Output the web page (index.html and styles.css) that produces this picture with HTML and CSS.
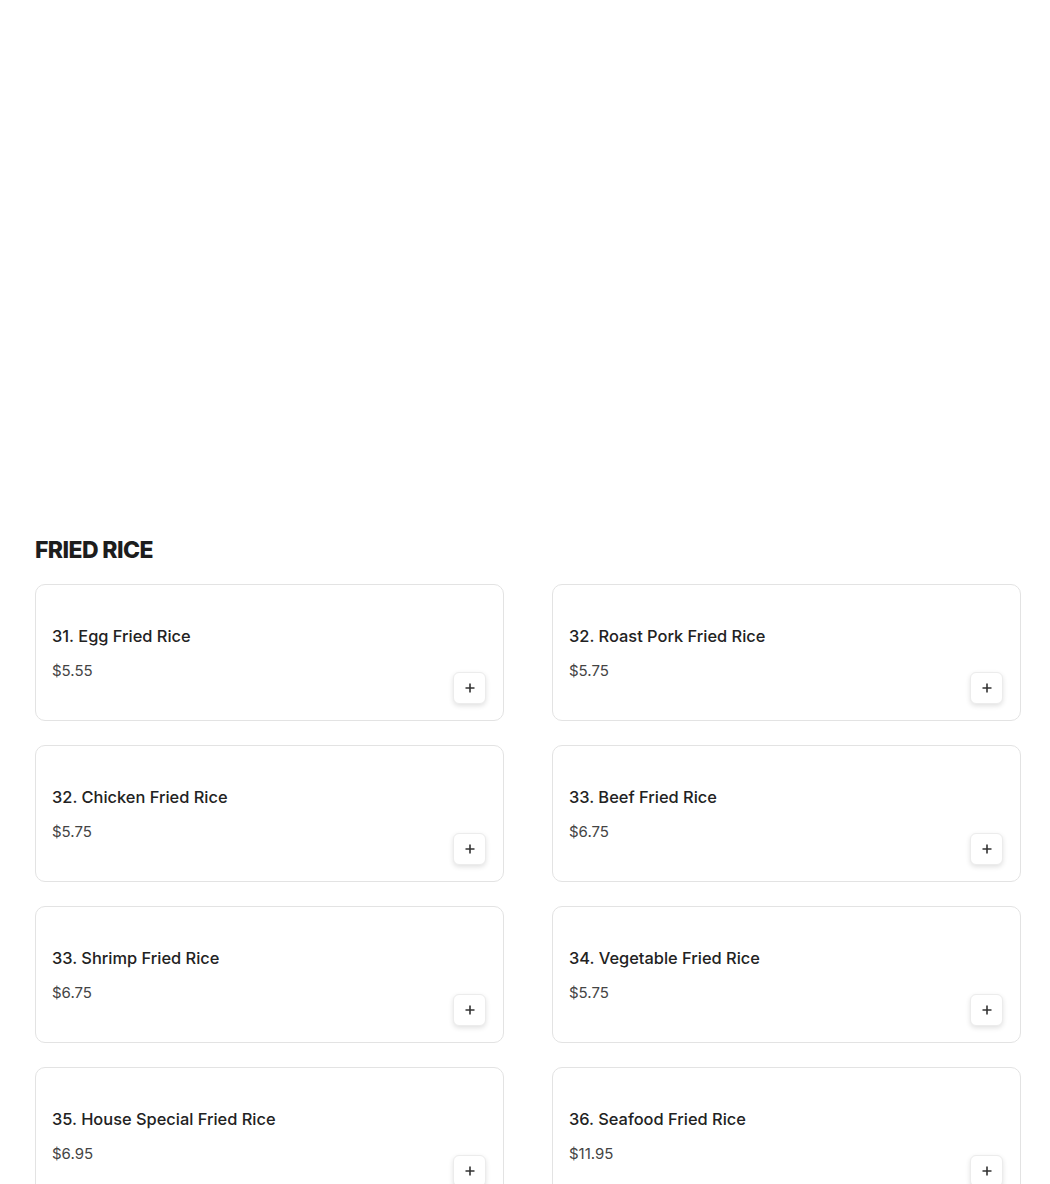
FILE: index.html
```html
<!DOCTYPE html>
<html>
<head>
<meta charset="utf-8">
<link rel="stylesheet" href="styles.css">
</head>
<body>
<div class="page">
  <div class="hero"></div>
  <section class="section">
    <h2 class="section-title">FRIED RICE</h2>
    <div class="grid">
      <div class="card"><div class="info"><div class="name">31. Egg Fried Rice</div><div class="price">$5.55</div></div><button class="add"><svg width="12" height="12" viewBox="0 0 12 12"><path d="M6 1.5v9M1.5 6h9" stroke="#333" stroke-width="1.6"/></svg></button></div>
      <div class="card"><div class="info"><div class="name">32. Roast Pork Fried Rice</div><div class="price">$5.75</div></div><button class="add"><svg width="12" height="12" viewBox="0 0 12 12"><path d="M6 1.5v9M1.5 6h9" stroke="#333" stroke-width="1.6"/></svg></button></div>
      <div class="card"><div class="info"><div class="name">32. Chicken Fried Rice</div><div class="price">$5.75</div></div><button class="add"><svg width="12" height="12" viewBox="0 0 12 12"><path d="M6 1.5v9M1.5 6h9" stroke="#333" stroke-width="1.6"/></svg></button></div>
      <div class="card"><div class="info"><div class="name">33. Beef Fried Rice</div><div class="price">$6.75</div></div><button class="add"><svg width="12" height="12" viewBox="0 0 12 12"><path d="M6 1.5v9M1.5 6h9" stroke="#333" stroke-width="1.6"/></svg></button></div>
      <div class="card"><div class="info"><div class="name">33. Shrimp Fried Rice</div><div class="price">$6.75</div></div><button class="add"><svg width="12" height="12" viewBox="0 0 12 12"><path d="M6 1.5v9M1.5 6h9" stroke="#333" stroke-width="1.6"/></svg></button></div>
      <div class="card"><div class="info"><div class="name">34. Vegetable Fried Rice</div><div class="price">$5.75</div></div><button class="add"><svg width="12" height="12" viewBox="0 0 12 12"><path d="M6 1.5v9M1.5 6h9" stroke="#333" stroke-width="1.6"/></svg></button></div>
      <div class="card"><div class="info"><div class="name">35. House Special Fried Rice</div><div class="price">$6.95</div></div><button class="add"><svg width="12" height="12" viewBox="0 0 12 12"><path d="M6 1.5v9M1.5 6h9" stroke="#333" stroke-width="1.6"/></svg></button></div>
      <div class="card"><div class="info"><div class="name">36. Seafood Fried Rice</div><div class="price">$11.95</div></div><button class="add"><svg width="12" height="12" viewBox="0 0 12 12"><path d="M6 1.5v9M1.5 6h9" stroke="#333" stroke-width="1.6"/></svg></button></div>
    </div>
  </section>
</div>
</body>
</html>
```
FILE: styles.css
```css
* { box-sizing: border-box; }
html, body { margin: 0; padding: 0; background: #fff; }
body { font-family: Inter, "Noto Sans", sans-serif; color: #222; overflow: hidden; }
.page { padding: 0 29px 0 35px; }
.hero { height: 536px; }
.section-title {
  margin: 0 0 20px;
  font-size: 23px;
  line-height: 28px;
  font-weight: 800;
  letter-spacing: -0.6px;
  color: #1d1d1d;
}
.grid {
  display: grid;
  grid-template-columns: 469px 469px;
  column-gap: 48px;
  row-gap: 24px;
}
.card {
  height: 137px;
  border: 1px solid #e3e3e3;
  border-radius: 10px;
  padding: 16px 17px 16px 16px;
  display: flex;
  justify-content: space-between;
  align-items: flex-end;
}
.info { align-self: flex-start; padding-top: 23px; }
.name { font-size: 16.4px; line-height: 24px; font-weight: 500; color: #222; }
.price { margin-top: 12px; font-size: 15px; line-height: 22px; font-weight: 400; color: #444; }
.add {
  width: 33px; height: 32px;
  border: 1px solid #ececec;
  border-radius: 6px;
  background: #fff;
  box-shadow: 0 2px 5px rgba(0,0,0,0.12);
  display: flex; align-items: center; justify-content: center;
  padding: 0;
  margin-bottom: 0;
}
```
